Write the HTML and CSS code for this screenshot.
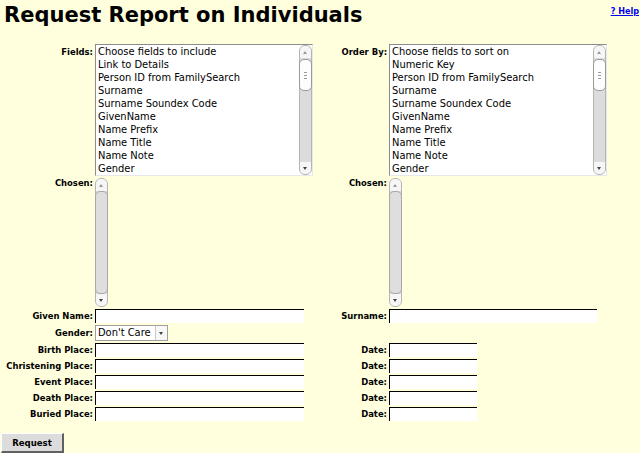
FILE: index.html
```html
<!DOCTYPE html>
<html>
<head>
<meta charset="utf-8">
<title>Request Report on Individuals</title>
<link rel="stylesheet" href="styles.css">
</head>
<body>
<div class="page">
  <a class="help" href="#">? Help</a>
  <h1 class="title">Request Report on Individuals</h1>
  <form class="form">
    <label class="lbl lbl-fields">Fields:</label>
    <div class="listbox wide">
      <ul class="opts">
        <li>Choose fields to include</li>
        <li>Link to Details</li>
        <li>Person ID from FamilySearch</li>
        <li>Surname</li>
        <li>Surname Soundex Code</li>
        <li>GivenName</li>
        <li>Name Prefix</li>
        <li>Name Title</li>
        <li>Name Note</li>
        <li>Gender</li>
      </ul>
      <div class="sb">
        <div class="sb-btn up"></div>
        <div class="sb-track"><div class="sb-thumb"><span class="grip"></span></div></div>
        <div class="sb-btn down"></div>
      </div>
    </div>
    <label class="lbl lbl-fields">Order By:</label>
    <div class="listbox wide">
      <ul class="opts">
        <li>Choose fields to sort on</li>
        <li>Numeric Key</li>
        <li>Person ID from FamilySearch</li>
        <li>Surname</li>
        <li>Surname Soundex Code</li>
        <li>GivenName</li>
        <li>Name Prefix</li>
        <li>Name Title</li>
        <li>Name Note</li>
        <li>Gender</li>
      </ul>
      <div class="sb">
        <div class="sb-btn up"></div>
        <div class="sb-track"><div class="sb-thumb"><span class="grip"></span></div></div>
        <div class="sb-btn down"></div>
      </div>
    </div>

    <label class="lbl lbl-chosen">Chosen:</label>
    <div class="listbox empty">
      <div class="sb">
        <div class="sb-btn up"></div>
        <div class="sb-track"><div class="sb-thumb full"></div></div>
        <div class="sb-btn down"></div>
      </div>
    </div>
    <label class="lbl lbl-chosen">Chosen:</label>
    <div class="listbox empty">
      <div class="sb">
        <div class="sb-btn up"></div>
        <div class="sb-track"><div class="sb-thumb full"></div></div>
        <div class="sb-btn down"></div>
      </div>
    </div>

    <label class="lbl">Given Name:</label>
    <input class="txt long" type="text">
    <label class="lbl">Surname:</label>
    <input class="txt long2" type="text">

    <label class="lbl lbl-gender">Gender:</label>
    <div class="combo"><span class="combo-val">Don't Care</span><span class="combo-btn"></span></div>
    <span class="empty-cell"></span>
    <span class="empty-cell"></span>

    <label class="lbl">Birth Place:</label>
    <input class="txt long" type="text">
    <label class="lbl">Date:</label>
    <input class="txt short" type="text">

    <label class="lbl">Christening Place:</label>
    <input class="txt long" type="text">
    <label class="lbl">Date:</label>
    <input class="txt short" type="text">

    <label class="lbl">Event Place:</label>
    <input class="txt long" type="text">
    <label class="lbl">Date:</label>
    <input class="txt short" type="text">

    <label class="lbl">Death Place:</label>
    <input class="txt long" type="text">
    <label class="lbl">Date:</label>
    <input class="txt short" type="text">

    <label class="lbl">Buried Place:</label>
    <input class="txt long" type="text">
    <label class="lbl">Date:</label>
    <input class="txt short" type="text">
  </form>
  <button class="request" type="button">Request</button>
</div>
</body>
</html>
```
FILE: styles.css
```css
html, body {
  margin: 0;
  padding: 0;
  background: #ffffdd;
}
body {
  font-family: "DejaVu Sans", Verdana, sans-serif;
  color: #000;
}
.page {
  position: relative;
  width: 640px;
  height: 453px;
}
.help {
  position: absolute;
  right: 1px;
  top: 3px;
  font-family: "DejaVu Sans Condensed", "DejaVu Sans", sans-serif;
  font-stretch: condensed;
  font-size: 9px;
  font-weight: bold;
  color: #0000ee;
  text-decoration: underline;
}
.title {
  margin: 3px 0 16px 4px;
  font-size: 21px;
  line-height: 25px;
  font-weight: bold;
}
.form {
  display: grid;
  grid-template-columns: 89px 218px 72px 218px;
  grid-template-rows: 132px 129px 14px 16px 14px 14px 14px 14px 14px;
  column-gap: 2px;
  row-gap: 2px;
  padding-left: 4px;
  align-items: center;
  font-family: "DejaVu Sans Condensed", "DejaVu Sans", sans-serif;
  font-stretch: condensed;
}
.lbl {
  align-self: start;
  padding-top: 1px;
  font-size: 9.4px;
  font-weight: bold;
  text-align: right;
  line-height: 11px;
  white-space: nowrap;
}
.lbl-fields { padding-top: 2px; }
.lbl-chosen { padding-top: 0; margin-top: -1px; }
.lbl-gender { padding-top: 2px; }
.listbox {
  display: flex;
  height: 100%;
  box-sizing: border-box;
  background: #fff;
  border-top: 1px solid #8c8c8c;
  border-left: 1px solid #8c8c8c;
  border-right: 1px solid #e8e8e8;
  border-bottom: 1px solid #e8e8e8;
  align-self: stretch;
}
.listbox.wide { width: 218px; }
.listbox.empty {
  width: 14px;
  background: transparent;
  border: none;
}
.opts {
  list-style: none;
  margin: 0;
  padding: 0 0 0 2px;
  flex: 1;
  font-size: 11px;
  line-height: 13px;
  overflow: hidden;
  white-space: nowrap;
}
.sb {
  width: 13px;
  box-sizing: border-box;
  display: flex;
  flex-direction: column;
  border: 1px solid #b4b4b4;
  border-radius: 6px;
  background: #dedede;
  margin: 0;
}
.sb-btn {
  height: 12px;
  background: #f6f6f6;
  position: relative;
  flex: none;
}
.sb-btn.up { border-radius: 5px 5px 0 0; }
.sb-btn.down { border-radius: 0 0 5px 5px; }
.sb-btn::after {
  content: "";
  position: absolute;
  left: 3px;
  width: 0;
  height: 0;
  border-left: 2.5px solid transparent;
  border-right: 2.5px solid transparent;
}
.sb-btn.up::after {
  top: 5px;
  border-bottom: 3px solid #999;
}
.sb-btn.down::after {
  top: 5px;
  border-top: 3px solid #444;
}
.sb-track {
  flex: 1;
  background: #dcdcdc;
  display: flex;
  flex-direction: column;
}
.sb-thumb {
  height: 30px;
  margin: 1px -1px 0;
  background: #fdfdfd;
  border: 1px solid #9a9a9a;
  border-radius: 5px;
  display: flex;
  align-items: center;
  justify-content: center;
}
.sb-thumb.full {
  flex: 1;
  height: auto;
  margin: 0 -1px;
  background: #dedede;
  border-color: #a8a8a8;
}
.grip {
  width: 3px;
  height: 5px;
  border-top: 1px solid #999;
  border-bottom: 1px solid #999;
  background: linear-gradient(#999, #999) center / 3px 1px no-repeat;
}
.txt {
  height: 14px;
  box-sizing: border-box;
  margin: 0;
  padding: 0 2px;
  background: #fff;
  border: none;
  border-top: 1px solid #000;
  border-left: 1px solid #000;
  font: 11px "DejaVu Sans Condensed", "DejaVu Sans", sans-serif;
  outline: none;
}
.txt.long { width: 209px; }
.txt.long2 { width: 208px; }
.txt.short { width: 88px; }
.combo {
  width: 73px;
  height: 16px;
  box-sizing: border-box;
  border: 1px solid #a0a0a0;
  background: #fff;
  display: flex;
  align-items: center;
  font-size: 11px;
  line-height: 14px;
}
.combo-val {
  flex: 1;
  padding-left: 2px;
  white-space: nowrap;
}
.combo-btn {
  width: 12px;
  height: 14px;
  box-sizing: border-box;
  border-left: 1px solid #c8c8c8;
  position: relative;
  background: #f8f8f8;
}
.combo-btn::after {
  content: "";
  position: absolute;
  left: 3px;
  top: 6px;
  border-left: 2.5px solid transparent;
  border-right: 2.5px solid transparent;
  border-top: 3px solid #444;
}
.request {
  display: block;
  margin: 12px 0 0 1px;
  width: 63px;
  height: 20px;
  padding: 0;
  font: bold 9.5px "DejaVu Sans Condensed", "DejaVu Sans", sans-serif;
  font-stretch: condensed;
  background: #dcdcdc;
  border-top: 1px solid #fff;
  border-left: 1px solid #fff;
  border-right: 2px solid #606060;
  border-bottom: 2px solid #606060;
  color: #000;
}
```
